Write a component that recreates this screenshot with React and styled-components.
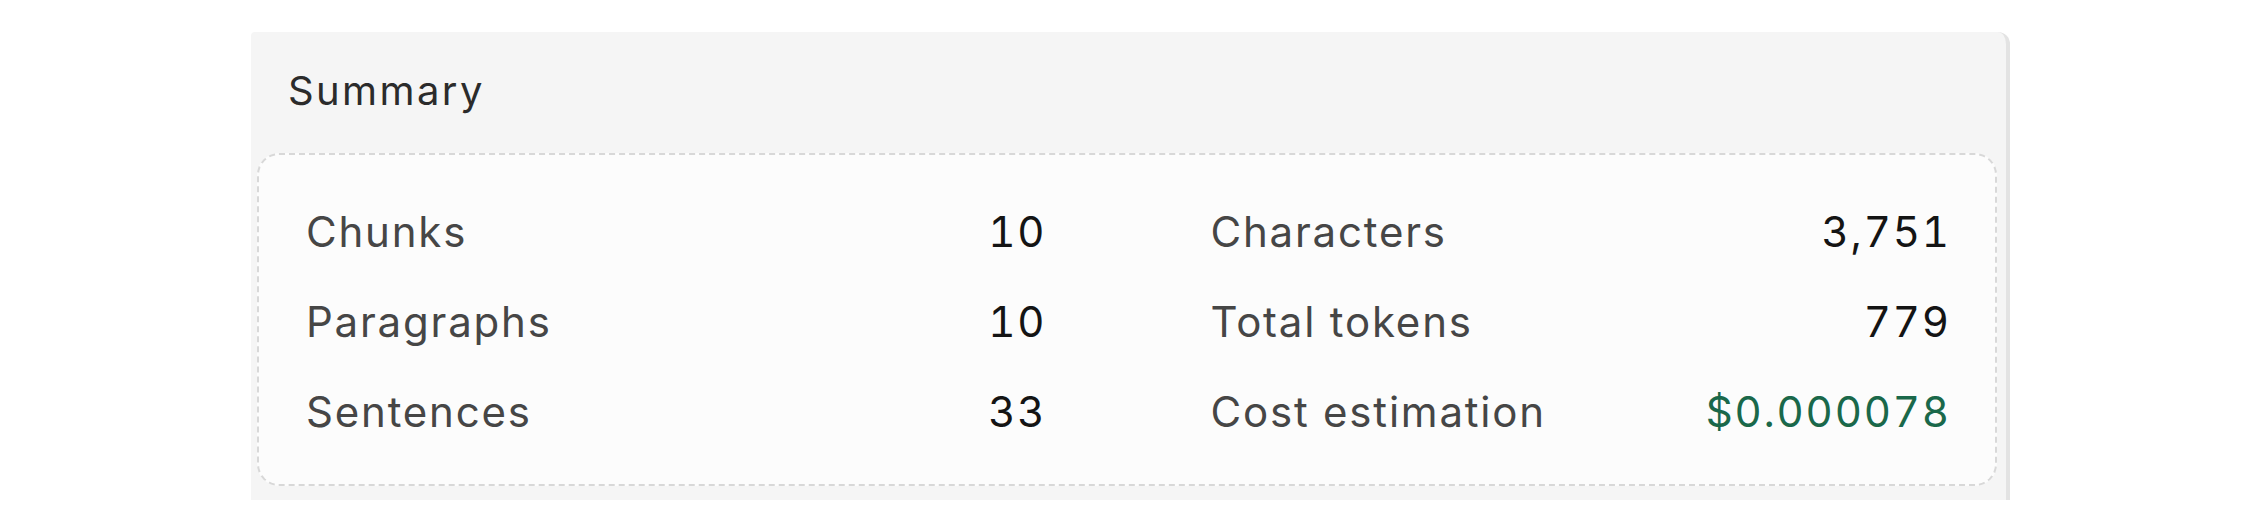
import styled, { createGlobalStyle } from "styled-components";

const GlobalStyle = createGlobalStyle`
  body {
    margin: 0;
    background: #ffffff;
    font-family: Inter, "Noto Sans", sans-serif;
  }
`;

const stats = [
  [
    { label: "Chunks", value: "10" },
    { label: "Paragraphs", value: "10" },
    { label: "Sentences", value: "33" },
  ],
  [
    { label: "Characters", value: "3,751" },
    { label: "Total tokens", value: "779" },
    { label: "Cost estimation", value: "$0.000078", money: true },
  ],
];

const App = () => {
  return (
    <>
      <GlobalStyle />
      <Panel>
        <Title>Summary</Title>
        <Box>
          {stats.map((col, i) => (
            <Column key={i}>
              {col.map((s) => (
                <Row key={s.label}>
                  <Label>{s.label}</Label>
                  <Value $money={s.money}>{s.value}</Value>
                </Row>
              ))}
            </Column>
          ))}
        </Box>
      </Panel>
    </>
  );
};

const Panel = styled.div`
  margin: 32px 0 0 251px;
  width: 1759px;
  height: 468px;
  box-sizing: border-box;
  background: #f5f5f5;
  border-right: 4px solid #e3e3e3;
  border-radius: 4px 12px 0 0;
  padding: 0 9px 14px 6px;
  display: flex;
  flex-direction: column;
`;

const Title = styled.div`
  font-size: 40px;
  line-height: 48px;
  letter-spacing: 2.4px;
  color: #2b2b2b;
  padding: 35px 0 38px 31px;
`;

const Box = styled.div`
  flex: 1;
  background: #fcfcfc;
  border: 2px dashed #d8d8d8;
  border-radius: 22px;
  padding: 32px 46px 0 47px;
  display: grid;
  grid-template-columns: 1fr 1fr;
  column-gap: 166px;
  align-content: start;
`;

const Column = styled.div`
  display: flex;
  flex-direction: column;
`;

const Row = styled.div`
  display: flex;
  justify-content: space-between;
  font-size: 42px;
  line-height: 90px;
  letter-spacing: 1.8px;
`;

const Label = styled.span`
  color: #464646;
`;

const Value = styled.span`
  margin-right: -1.8px;
  font-variant-numeric: tabular-nums;
  color: ${(p) => (p.$money ? "#1a684a" : "#141414")};
`;

export default App;
